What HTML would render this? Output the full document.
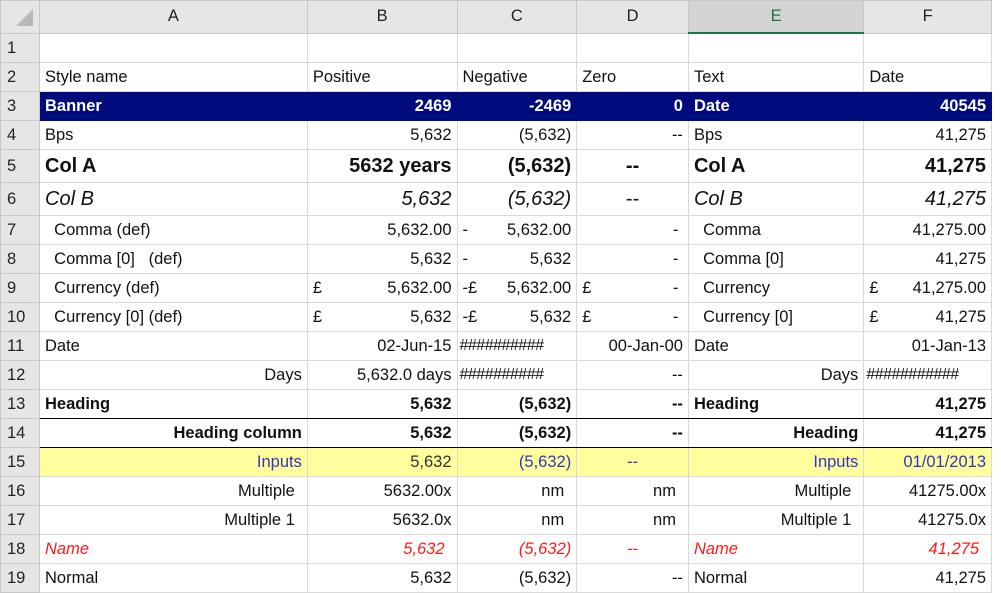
<!DOCTYPE html>
<html><head><meta charset="utf-8"><style>
body{margin:0;width:1001px;height:586px;overflow:hidden;background:#fff;font-family:"Liberation Sans",Arial,sans-serif;font-size:16.5px;color:#111}
table{border-collapse:collapse;table-layout:fixed;position:absolute;left:0;top:0}
td{border:1px solid #d9d9d9;padding:0 5px;white-space:nowrap;overflow:hidden;height:28px;line-height:28px}
tr.h td{background:#e6e6e6;text-align:center;border-color:#c8c8c8;height:31px;line-height:31px;color:#222}
td.rh{background:#e6e6e6;text-align:left;padding-left:6px;border-color:#c8c8c8;color:#222}
td.sel{background:#d3d3d3!important;color:#217346!important;border-bottom:2px solid #217346!important}
td.x{border:none!important;background:#fff!important;padding:0}
.r{text-align:right}.c{text-align:center}
.b{font-weight:bold}.i{font-style:italic}
tr.ban td{background:#000c7d;color:#fff;font-weight:bold;border-color:#000c7d}
tr.ban td.rh{background:#e6e6e6;color:#222;font-weight:normal;border-color:#c8c8c8}
tr.big td{font-size:20px;height:32px;line-height:32px}
tr.big td.rh{font-size:16.5px}
tr.inp td{background:#ffff9c;color:#3333cc}
tr.inp td.rh{background:#e6e6e6;color:#222}
tr.nm td{color:#ff1a1a;font-style:italic}
tr.nm td.rh{color:#222;font-style:normal}
tr.hb td{border-bottom:1.5px solid #000}
tr.hb td.rh{border-bottom:1px solid #c8c8c8}
.sp{display:flex;justify-content:space-between}
.hs{padding:0 2px;letter-spacing:-0.5px;font-size:16px}
</style></head><body>
<table>
<colgroup><col style="width:37px"><col style="width:269px"><col style="width:150px"><col style="width:120px"><col style="width:112px"><col style="width:176px"><col style="width:128px"><col style="width:9px"></colgroup>
<tr class="h"><td style="background:#e6e6e6"><svg width="20" height="20" style="vertical-align:middle;margin-left:8px"><polygon points="19,2 19,19 2,19" fill="#b8b8b8"/></svg></td><td>A</td><td>B</td><td>C</td><td>D</td><td class="sel">E</td><td>F</td><td class="x"></td></tr>
<tr><td class="rh">1</td><td></td><td></td><td></td><td></td><td></td><td></td><td class="x"></td></tr>
<tr><td class="rh">2</td><td>Style name</td><td>Positive</td><td>Negative</td><td>Zero</td><td>Text</td><td>Date</td><td class="x"></td></tr>
<tr class="ban"><td class="rh">3</td><td>Banner</td><td class="r">2469</td><td class="r">-2469</td><td class="r">0</td><td>Date</td><td class="r">40545</td><td class="x"></td></tr>
<tr><td class="rh">4</td><td>Bps</td><td class="r">5,632</td><td class="r">(5,632)</td><td class="r">--</td><td>Bps</td><td class="r">41,275</td><td class="x"></td></tr>
<tr class="big b"><td class="rh" style="font-weight:normal">5</td><td class="b">Col A</td><td class="r b">5632 years</td><td class="r b">(5,632)</td><td class="c b">--</td><td class="b">Col A</td><td class="r b">41,275</td><td class="x"></td></tr>
<tr class="big"><td class="rh">6</td><td class="i">Col B</td><td class="r i">5,632</td><td class="r i">(5,632)</td><td class="c">--</td><td class="i">Col B</td><td class="r i">41,275</td><td class="x"></td></tr>
<tr><td class="rh">7</td><td>&nbsp;&nbsp;Comma (def)</td><td class="r">5,632.00</td><td><div class="sp"><span>-</span><span>5,632.00</span></div></td><td class="r">-&nbsp;</td><td>&nbsp;&nbsp;Comma</td><td class="r">41,275.00</td><td class="x"></td></tr>
<tr><td class="rh">8</td><td>&nbsp;&nbsp;Comma [0]&nbsp;&nbsp;&nbsp;(def)</td><td class="r">5,632</td><td><div class="sp"><span>-</span><span>5,632</span></div></td><td class="r">-&nbsp;</td><td>&nbsp;&nbsp;Comma [0]</td><td class="r">41,275</td><td class="x"></td></tr>
<tr><td class="rh">9</td><td>&nbsp;&nbsp;Currency (def)</td><td><div class="sp"><span>£</span><span>5,632.00</span></div></td><td><div class="sp"><span>-£</span><span>5,632.00</span></div></td><td><div class="sp"><span>£</span><span>-&nbsp;</span></div></td><td>&nbsp;&nbsp;Currency</td><td><div class="sp"><span>£</span><span>41,275.00</span></div></td><td class="x"></td></tr>
<tr><td class="rh">10</td><td>&nbsp;&nbsp;Currency [0] (def)</td><td><div class="sp"><span>£</span><span>5,632</span></div></td><td><div class="sp"><span>-£</span><span>5,632</span></div></td><td><div class="sp"><span>£</span><span>-&nbsp;</span></div></td><td>&nbsp;&nbsp;Currency [0]</td><td><div class="sp"><span>£</span><span>41,275</span></div></td><td class="x"></td></tr>
<tr><td class="rh">11</td><td>Date</td><td class="r">02-Jun-15</td><td class="hs">##########</td><td class="r">00-Jan-00</td><td>Date</td><td class="r">01-Jan-13</td><td class="x"></td></tr>
<tr><td class="rh">12</td><td class="r">Days</td><td class="r">5,632.0 days</td><td class="hs">##########</td><td class="r">--</td><td class="r">Days</td><td class="hs">###########</td><td class="x"></td></tr>
<tr class="hb b"><td class="rh" style="font-weight:normal">13</td><td class="b">Heading</td><td class="r b">5,632</td><td class="r b">(5,632)</td><td class="r b">--</td><td class="b">Heading</td><td class="r b">41,275</td><td class="x"></td></tr>
<tr class="hb b"><td class="rh" style="font-weight:normal">14</td><td class="r b">Heading column</td><td class="r b">5,632</td><td class="r b">(5,632)</td><td class="r b">--</td><td class="r b">Heading</td><td class="r b">41,275</td><td class="x"></td></tr>
<tr class="inp"><td class="rh">15</td><td class="r">Inputs</td><td class="r" style="color:#333">5,632</td><td class="r">(5,632)</td><td class="c">--</td><td class="r">Inputs</td><td class="r">01/01/2013</td><td class="x"></td></tr>
<tr><td class="rh">16</td><td class="r" style="padding-right:12px">Multiple</td><td class="r">5632.00x</td><td class="r" style="padding-right:12px">nm</td><td class="r" style="padding-right:12px">nm</td><td class="r" style="padding-right:12px">Multiple</td><td class="r">41275.00x</td><td class="x"></td></tr>
<tr><td class="rh">17</td><td class="r" style="padding-right:12px">Multiple 1</td><td class="r">5632.0x</td><td class="r" style="padding-right:12px">nm</td><td class="r" style="padding-right:12px">nm</td><td class="r" style="padding-right:12px">Multiple 1</td><td class="r">41275.0x</td><td class="x"></td></tr>
<tr class="nm"><td class="rh">18</td><td>Name</td><td class="r" style="padding-right:12px">5,632</td><td class="r">(5,632)</td><td class="c">--</td><td>Name</td><td class="r" style="padding-right:12px">41,275</td><td class="x"></td></tr>
<tr><td class="rh">19</td><td>Normal</td><td class="r">5,632</td><td class="r">(5,632)</td><td class="r">--</td><td>Normal</td><td class="r">41,275</td><td class="x"></td></tr>
</table>
</body></html>
